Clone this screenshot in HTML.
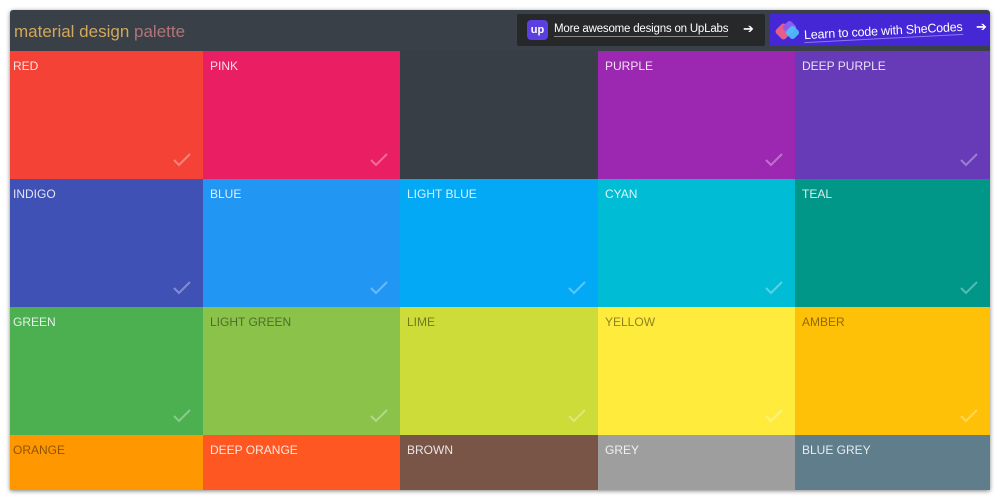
<!DOCTYPE html>
<html><head><style>
*{margin:0;padding:0;box-sizing:border-box}
body{width:1000px;height:500px;background:#fff;font-family:"Liberation Sans",sans-serif;position:relative;overflow:hidden}
#f{position:absolute;left:10px;top:10px;width:980px;height:480px;background:#3a4047;box-shadow:0 1px 4px rgba(0,0,0,.5);border-radius:3px 3px 0 0;overflow:hidden}
#t{position:absolute;left:4px;top:12px;font-size:17px;color:#d2a85a}
#t span{color:#b0757a}
.c{position:absolute;font-size:12px;color:rgba(255,255,255,.85);padding:8px 0 0 7px}
.d{color:rgba(0,0,0,.45)}
.c svg{position:absolute;right:12px;bottom:12px}
#up{position:absolute;left:507px;top:4px;width:248px;height:32px;background:#26282a;border-radius:2px;color:#fff;font-size:11.5px}
#sc{position:absolute;left:760px;top:4px;width:220px;height:32px;background:#4527d6;color:#fff;font-size:12.5px}
</style></head><body>
<div id="f">
<div id="t">material design <span>palette</span></div>
<div id="up"><div style="position:absolute;left:10px;top:6px;width:21px;height:20px;background:#5b3fe0;border-radius:4px;font-size:11px;font-weight:bold;text-align:center;line-height:20px">up</div><div style="position:absolute;left:37px;top:9px;border-bottom:1px solid #888;padding-bottom:1px;letter-spacing:-0.2px">More awesome designs on UpLabs</div><div style="position:absolute;left:226px;top:7px;font-size:13px">➔</div></div>
<div id="sc"><div style="position:absolute;left:7px;top:11px;width:13px;height:13px;background:#e65c8a;transform:rotate(45deg);border-radius:3px"></div><div style="position:absolute;left:14px;top:8px;width:11px;height:11px;background:#8a5cf0;transform:rotate(45deg);border-radius:3px"></div><div style="position:absolute;left:17px;top:13px;width:11px;height:11px;background:#4fc3f7;transform:rotate(45deg);border-radius:3px;opacity:.9"></div><div style="position:absolute;left:34px;top:10px;transform:rotate(-3deg);border-bottom:1px solid #8a7be8;letter-spacing:-0.2px">Learn to code with SheCodes</div><div style="position:absolute;left:206px;top:5px;font-size:13px">➔</div></div>
</div>
<div id="g"></div>
<script>
var cols=[10,203,400,598,795,990],rows=[51,179,307,435,490];
var d=[["RED","#f44336",0],["PINK","#e91e63",0],["","#373e46",0],["PURPLE","#9c27b0",0],["DEEP PURPLE","#673ab7",0],
["INDIGO","#3f51b5",0],["BLUE","#2196f3",0],["LIGHT BLUE","#03a9f4",0],["CYAN","#00bcd4",0],["TEAL","#009688",0],
["GREEN","#4caf50",0],["LIGHT GREEN","#8bc34a",1],["LIME","#cddc39",1],["YELLOW","#ffeb3b",1],["AMBER","#ffc107",1],
["ORANGE","#ff9800",1],["DEEP ORANGE","#ff5722",0],["BROWN","#795548",0],["GREY","#9e9e9e",0],["BLUE GREY","#607d8b",0]];
var h="";
d.forEach(function(x,i){var r=Math.floor(i/5),c=i%5;
var l=cols[c],t=rows[r],w=cols[c+1]-l,hh=rows[r+1]-t;
var ck=(r<3&&x[0])?'<svg width="18" height="14" viewBox="0 0 18 14"><path d="M1 7l5 5L17 1" fill="none" stroke="rgba(255,255,255,.35)" stroke-width="2"/></svg>':'';
h+='<div class="c'+(x[2]?' d':'')+'" style="left:'+l+'px;top:'+t+'px;width:'+w+'px;height:'+hh+'px;background:'+x[1]+(c==0?';padding-left:3px':'')+'">'+x[0]+ck+'</div>';});
document.getElementById("g").innerHTML=h;
</script>
</body></html>
